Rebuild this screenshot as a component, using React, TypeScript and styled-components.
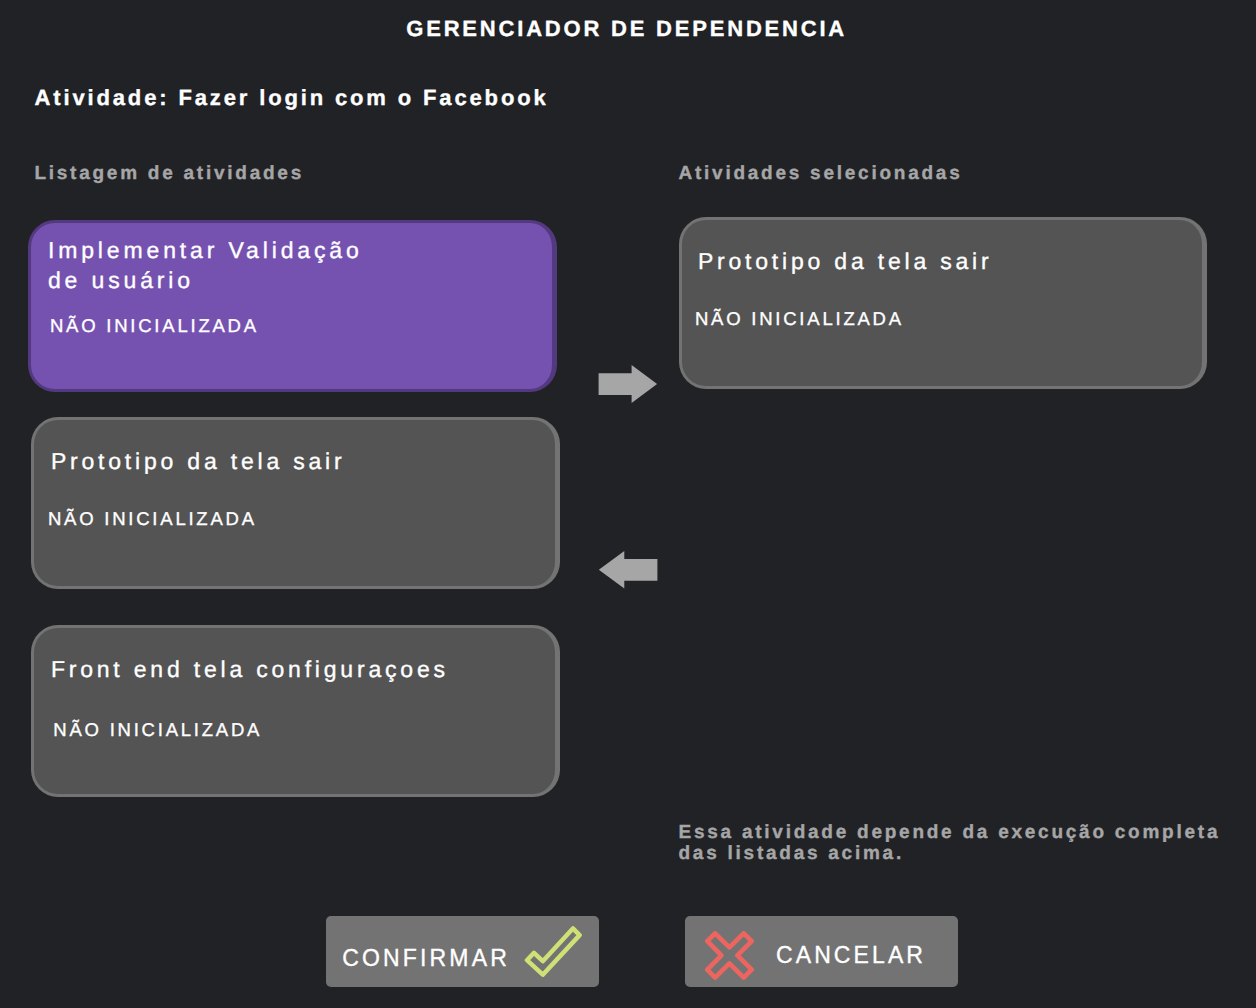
import React from "react";
import styled, { createGlobalStyle } from "styled-components";

const GlobalStyle = createGlobalStyle`
  * { box-sizing: border-box; }
  body {
    margin: 0;
    background: #212226;
    font-family: "Liberation Sans", Arial, sans-serif;
    color: #fff;
    -webkit-text-stroke: 0.35px currentColor;
    text-rendering: geometricPrecision;
  }
  h1, h2, h3, p { margin: 0; }
`;

const Screen = styled.main`
  width: 1256px;
  height: 1008px;
  display: flex;
  flex-direction: column;
  overflow: hidden;
  background: #212226;
`;

const Title = styled.h1`
  padding: 16px 0 0 406.3px;
  font-size: 22px;
  line-height: 26px;
  letter-spacing: 2.8px;
  white-space: nowrap;
`;

const ActivityName = styled.h2`
  padding: 43px 0 0 34.5px;
  font-size: 22px;
  line-height: 26px;
  letter-spacing: 2.86px;
  white-space: nowrap;
`;

const Board = styled.div`
  display: flex;
  flex: none;
  height: 804.5px;
  padding-top: 51px;
`;

const Listing = styled.section`
  width: 560px;
  padding-left: 28.4px;
`;

const Transfer = styled.nav`
  width: 118.5px;
  padding: 203px 0 0 38px;
  display: flex;
  flex-direction: column;
  gap: 147px;
`;

const Selected = styled.section`
  width: 560px;
  display: flex;
  flex-direction: column;
`;

const ColumnTitle = styled.h3<{ $indent?: number; $gap: number }>`
  padding: 1px 0 0 ${(p) => p.$indent ?? 0}px;
  margin-bottom: ${(p) => p.$gap}px;
  font-size: 19px;
  line-height: 22px;
  letter-spacing: 2.75px;
  color: #a6a6a6;
  white-space: nowrap;
`;

const Card = styled.article<{ $active?: boolean; $shift?: number; $space?: number; $pad?: number }>`
  width: 528.5px;
  height: 172px;
  margin: ${(p) => p.$space ?? 0}px 0 0 ${(p) => p.$shift ?? 0}px;
  padding-top: ${(p) => p.$pad ?? 27}px;
  border: 3px solid ${(p) => (p.$active ? "#533980" : "#737373")};
  border-right-width: 5px;
  border-radius: 27px;
  background: ${(p) => (p.$active ? "#7652b0" : "#545454")};
`;

const CardTitle = styled.h3<{ $indent: number; $spacing?: number }>`
  padding-left: ${(p) => p.$indent}px;
  font-size: 23px;
  font-weight: 400;
  line-height: 29.4px;
  letter-spacing: ${(p) => p.$spacing ?? 3.8}px;
  white-space: nowrap;
`;

const Status = styled.p<{ $indent: number; $gap: number }>`
  margin-top: ${(p) => p.$gap}px;
  padding-left: ${(p) => p.$indent}px;
  font-size: 18.5px;
  line-height: 20px;
  letter-spacing: 2.78px;
  white-space: nowrap;
`;

const MoveButton = styled.button`
  width: 60px;
  height: 39px;
  padding: 0;
  border: 0;
  background: none;
  svg { display: block; }
`;

const Note = styled.p`
  margin-top: auto;
  margin-bottom: 51.5px;
  font-size: 19px;
  font-weight: 700;
  line-height: 21px;
  letter-spacing: 2.75px;
  color: #a6a6a6;
  white-space: nowrap;
`;

const Actions = styled.footer`
  display: flex;
  gap: 86px;
  padding: 0 0 0 326px;
`;

const ActionButton = styled.button<{ $left: number; $top: number; $gap: number }>`
  width: 273px;
  height: 71.5px;
  display: flex;
  align-items: flex-start;
  gap: ${(p) => p.$gap}px;
  padding: ${(p) => p.$top}px 0 0 ${(p) => p.$left}px;
  border: 0;
  border-radius: 5px;
  background: #737373;
  color: #fff;
  font: 400 23px/26px "Liberation Sans", Arial, sans-serif;
  svg { display: block; flex: none; }
`;

const ActionLabel = styled.span<{ $top: number; $spacing: number }>`
  margin-top: ${(p) => p.$top}px;
  letter-spacing: ${(p) => p.$spacing}px;
`;

const ArrowRight = () => (
  <svg width="60" height="39" viewBox="0 0 60 39">
    <path d="M.6 8.3H33.6V0L59.1 19 33.6 38V30H.6Z" fill="#a6a6a6" />
  </svg>
);

const ArrowLeft = () => (
  <svg width="60" height="39" viewBox="0 0 60 39">
    <path d="M59.4 8H26.3V0L.8 18.8 26.3 37.6V29.8H59.4Z" fill="#a6a6a6" />
  </svg>
);

const CheckMark = () => (
  <svg width="58" height="53" viewBox="0 0 58 53" fill="none" stroke="#cfe077" strokeWidth="4.5" strokeLinejoin="round">
    <path d="M3 34.2 10 26.8 18.8 35.2 48.9 2.4 55.6 9.1 18.8 48.7Z" />
  </svg>
);

const CrossMark = () => (
  <svg width="50" height="50" viewBox="0.6 0.6 50 50" fill="none" stroke="#ee6560" strokeWidth="4.6" strokeLinejoin="round">
    <path d="M2.9 10.7 10.7 2.9 25 17 39.3 2.9 47.3 10.7 33 25 47.3 39.3 39.3 47.3 25 33 10.7 47.3 2.9 39.3 17 25Z" />
  </svg>
);

export default function App() {
  return (
    <>
      <GlobalStyle />
      <Screen>
        <Title>GERENCIADOR DE DEPENDENCIA</Title>
        <ActivityName>Atividade: Fazer login com o Facebook</ActivityName>
        <Board>
          <Listing>
            <ColumnTitle $indent={6} $gap={35.4}>Listagem de atividades</ColumnTitle>
            <Card $active $pad={13}>
              <CardTitle $indent={16.5} $spacing={3.87}>
                Implementar Validação
                <br />
                de usuário
              </CardTitle>
              <Status $indent={18.5} $gap={20.6}>NÃO INICIALIZADA</Status>
            </Card>
            <Card $shift={3.1} $space={24.5}>
              <CardTitle $indent={16.4}>Prototipo da tela sair</CardTitle>
              <Status $indent={13.4} $gap={32.6}>NÃO INICIALIZADA</Status>
            </Card>
            <Card $shift={3.1} $space={36.5}>
              <CardTitle $indent={16.4}>Front end tela configuraçoes</CardTitle>
              <Status $indent={18.8} $gap={35}>NÃO INICIALIZADA</Status>
            </Card>
          </Listing>
          <Transfer>
            <MoveButton aria-label="Adicionar"><ArrowRight /></MoveButton>
            <MoveButton aria-label="Remover"><ArrowLeft /></MoveButton>
          </Transfer>
          <Selected>
            <ColumnTitle $gap={32}>Atividades selecionadas</ColumnTitle>
            <Card>
              <CardTitle $indent={16.4}>Prototipo da tela sair</CardTitle>
              <Status $indent={13.4} $gap={32.5}>NÃO INICIALIZADA</Status>
            </Card>
            <Note>
              Essa atividade depende da execução completa
              <br />
              das listadas acima.
            </Note>
          </Selected>
        </Board>
        <Actions>
          <ActionButton $left={16.3} $top={10} $gap={13.7}>
            <ActionLabel $top={19} $spacing={3.15}>CONFIRMAR</ActionLabel>
            <CheckMark />
          </ActionButton>
          <ActionButton $left={19.5} $top={15} $gap={21.5}>
            <CrossMark />
            <ActionLabel $top={11} $spacing={3.1}>CANCELAR</ActionLabel>
          </ActionButton>
        </Actions>
      </Screen>
    </>
  );
}
